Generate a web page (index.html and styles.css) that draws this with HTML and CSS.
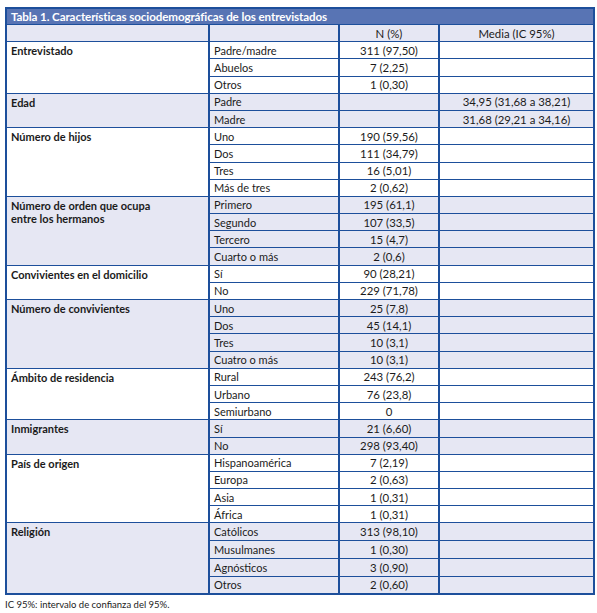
FILE: index.html
```html
<!DOCTYPE html>
<html lang="es">
<head>
<meta charset="utf-8">
<title>Tabla 1</title>
<link rel="stylesheet" href="styles.css">
</head>
<body>
<div class="wrap">
<table class="tbl">
<colgroup><col class="c1"><col class="c2"><col class="c3"><col class="c4"></colgroup>
<thead>
<tr class="title"><th colspan="4">Tabla 1. Características sociodemográficas de los entrevistados</th></tr>
<tr class="head sh"><th></th><th></th><th class="num">N (%)</th><th class="num">Media (IC 95%)</th></tr>
</thead>
<tbody>
<tr><td class="grp" rowspan="3">Entrevistado</td><td>Padre/madre</td><td class="num">311 (97,50)</td><td></td></tr>
<tr><td>Abuelos</td><td class="num">7 (2,25)</td><td></td></tr>
<tr><td>Otros</td><td class="num">1 (0,30)</td><td></td></tr>

<tr class="sh"><td class="grp" rowspan="2">Edad</td><td>Padre</td><td></td><td class="num">34,95 (31,68 a 38,21)</td></tr>
<tr class="sh"><td>Madre</td><td></td><td class="num">31,68 (29,21 a 34,16)</td></tr>

<tr><td class="grp" rowspan="4">Número de hijos</td><td>Uno</td><td class="num">190 (59,56)</td><td></td></tr>
<tr><td>Dos</td><td class="num">111 (34,79)</td><td></td></tr>
<tr><td>Tres</td><td class="num">16 (5,01)</td><td></td></tr>
<tr><td>Más de tres</td><td class="num">2 (0,62)</td><td></td></tr>

<tr class="sh"><td class="grp" rowspan="4">Número de orden que ocupa<br>entre los hermanos</td><td>Primero</td><td class="num">195 (61,1)</td><td></td></tr>
<tr class="sh"><td>Segundo</td><td class="num">107 (33,5)</td><td></td></tr>
<tr class="sh"><td>Tercero</td><td class="num">15 (4,7)</td><td></td></tr>
<tr class="sh"><td>Cuarto o más</td><td class="num">2 (0,6)</td><td></td></tr>

<tr><td class="grp" rowspan="2">Convivientes en el domicilio</td><td>Sí</td><td class="num">90 (28,21)</td><td></td></tr>
<tr><td>No</td><td class="num">229 (71,78)</td><td></td></tr>

<tr class="sh"><td class="grp" rowspan="4">Número de convivientes</td><td>Uno</td><td class="num">25 (7,8)</td><td></td></tr>
<tr class="sh"><td>Dos</td><td class="num">45 (14,1)</td><td></td></tr>
<tr class="sh"><td>Tres</td><td class="num">10 (3,1)</td><td></td></tr>
<tr class="sh"><td>Cuatro o más</td><td class="num">10 (3,1)</td><td></td></tr>

<tr><td class="grp" rowspan="3">Ámbito de residencia</td><td>Rural</td><td class="num">243 (76,2)</td><td></td></tr>
<tr><td>Urbano</td><td class="num">76 (23,8)</td><td></td></tr>
<tr><td>Semiurbano</td><td class="num">0</td><td></td></tr>

<tr class="sh"><td class="grp" rowspan="2">Inmigrantes</td><td>Sí</td><td class="num">21 (6,60)</td><td></td></tr>
<tr class="sh"><td>No</td><td class="num">298 (93,40)</td><td></td></tr>

<tr><td class="grp" rowspan="4">País de origen</td><td>Hispanoamérica</td><td class="num">7 (2,19)</td><td></td></tr>
<tr><td>Europa</td><td class="num">2 (0,63)</td><td></td></tr>
<tr><td>Asia</td><td class="num">1 (0,31)</td><td></td></tr>
<tr><td>África</td><td class="num">1 (0,31)</td><td></td></tr>

<tr class="sh"><td class="grp" rowspan="4">Religión</td><td>Católicos</td><td class="num">313 (98,10)</td><td></td></tr>
<tr class="sh tall"><td>Musulmanes</td><td class="num">1 (0,30)</td><td></td></tr>
<tr class="sh"><td>Agnósticos</td><td class="num">3 (0,90)</td><td></td></tr>
<tr class="sh"><td>Otros</td><td class="num">2 (0,60)</td><td></td></tr>
</tbody>
</table>
<p class="note">IC 95%: intervalo de confianza del 95%.</p>
</div>
</body>
</html>
```
FILE: styles.css
```css
html, body {
  margin: 0;
  padding: 0;
  background: #ffffff;
}
body {
  font-family: Lato, "Open Sans", "Liberation Sans", sans-serif;
  color: #1b1b1b;
}
.wrap {
  padding: 7px 0 0 5px;
}
.tbl {
  border-collapse: collapse;
  table-layout: fixed;
  width: 588px;
  font-size: 11px;
  border: 2px solid #1d4f9b;
}
.c1 { width: 203px; }
.c2 { width: 130px; }
.c3 { width: 100px; }
.c4 { width: 155px; }
.tbl td, .tbl th {
  border-left: 2px solid #1d4f9b;
  border-right: 2px solid #1d4f9b;
  border-top: 1.5px solid #1d4f9b;
  border-bottom: 1.5px solid #1d4f9b;
  padding: 0 0 0 4px;
  height: 16.2px;
  line-height: 13px;
  text-align: left;
  vertical-align: middle;
  font-weight: 400;
  white-space: nowrap;
}
.tbl .title th {
  background: #5874b4;
  color: #ffffff;
  font-weight: 700;
  font-size: 11.6px;
  height: 15px;
  letter-spacing: -0.1px;
  padding-left: 4px;
  border-bottom: 1px solid #1d4f9b;
}
.tbl .num {
  text-align: center;
  padding: 0;
  font-size: 11.4px;
}
.tbl td.grp {
  vertical-align: top;
  font-weight: 700;
  padding-top: 2px;
}
.sh td, .sh th {
  background: #e6e7f3;
}
.tbl .tall td {
  height: 17.8px;
}
.note {
  margin: 4px 0 0 0;
  font-size: 9.5px;
  color: #1b1b1b;
}
```
